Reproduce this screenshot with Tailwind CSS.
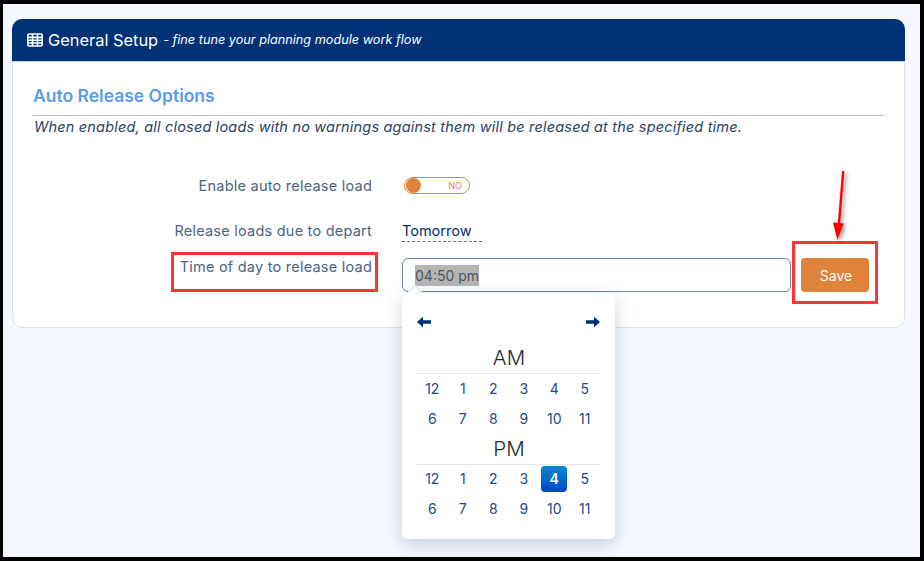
<!DOCTYPE html>
<html>
<head>
<meta charset="utf-8">
<script src="https://cdn.jsdelivr.net/npm/@tailwindcss/browser@4"></script>
</head>
<body class="m-0 bg-black font-['Inter',sans-serif]">
<div class="relative h-[561px] w-[924px] overflow-hidden bg-black pt-[4px] pr-[4px] pb-[4px] pl-[3px]">
  <div class="h-full w-full bg-[#f5f9ff] pt-[15px] pr-[15px] pl-[9px]">
    <div class="h-[309px] rounded-[10px] border border-[#dfe3e8] bg-white">
      <div class="-mx-px -mt-px flex h-[43px] items-center gap-[4px] rounded-t-[10px] border-b border-[#c9d3e0] bg-[#003275] pl-[15px] text-white">
        <svg width="16" height="14" viewBox="0 0 16 14" fill="none" stroke="white" stroke-width="1.6"><rect x="0.8" y="1" width="14.4" height="12" rx="1.2"/><path d="M0.8 4.4H15.2M0.8 7.2H15.2M0.8 10H15.2M5.5 1V13M10.5 1V13" /></svg>
        <span class="ml-[1px] text-[16.4px] leading-none">General Setup</span>
        <span class="ml-[1px] text-[12.7px] italic leading-none">- fine tune your planning module work flow</span>
      </div>
      <div class="px-[20px] pt-[24px]">
        <h2 class="border-b border-[#b4bfd0] pb-[9px] text-[17.5px] font-semibold leading-[20px] text-[#5a9bec]">Auto Release Options</h2>
        <p class="mt-[2px] pl-[1px] text-[14.5px] italic leading-[17px] tracking-[0.19px] text-[#2b4266]">When enabled, all closed loads with no warnings against them will be released at the specified time.</p>
        <div class="mt-[42px] flex items-center">
          <div class="w-[339px] text-right text-[14.5px] leading-[17px] tracking-[0.23px] text-[#4c6487]">Enable auto release load</div>
          <div class="ml-[32px] flex h-[17px] w-[66px] items-center justify-between rounded-full border border-[#e08338] pr-[7px] pl-[1px]">
            <span class="h-[15px] w-[15px] rounded-full bg-[#e08338]"></span>
            <span class="text-[9px] text-[#e87f5a]">NO</span>
          </div>
        </div>
        <div class="mt-[28px] flex items-start">
          <div class="w-[339px] text-right text-[14.5px] leading-[17px] tracking-[0.23px] text-[#4c6487]">Release loads due to depart</div>
          <div class="ml-[30px] h-[20px] w-[80px] border-b border-dashed border-[#6b6b6b] text-[14.5px] leading-[18px] text-[#00306f]">Tomorrow</div>
        </div>
        <div class="mt-[14px] flex items-start">
          <div class="w-[339px] pt-[2px] text-right text-[14.5px] leading-[17px] tracking-[0.23px] text-[#4c6487]">Time of day to release load</div>
          <div class="mt-[2px] ml-[30px] flex h-[34px] w-[389px] items-center rounded-[6px] border border-[#6486b8] bg-white pl-[12px] text-[14px] text-[#4b5563]"><span class="bg-[#b5b5b5]">04:50 pm</span></div>
          <button class="mt-[2px] ml-[10px] h-[34px] w-[68px] rounded-[4px] bg-[#df823a] pl-[2px] text-[14px] text-white">Save</button>
        </div>
      </div>
    </div>
  </div>

  <!-- time picker popover -->
  <div class="absolute top-[293px] left-[402px] h-[246px] w-[213px] rounded-[6px] bg-white px-[15px] pt-[22px] shadow-[0_5px_18px_rgba(60,80,110,0.25)]">
    <div class="absolute -top-[6px] left-[8px] h-[10px] w-[10px] rotate-45 border-t border-l border-[#dcdfe4] bg-white"></div>
    <div class="flex h-[14px] items-center justify-between">
      <svg width="14" height="12" viewBox="0 0 14 12" fill="#00306f"><path d="M0 6 6 0.8V4.2H14V7.8H6V11.2Z"/></svg>
      <svg width="14" height="12" viewBox="0 0 14 12" fill="#00306f"><path d="M14 6 8 0.8V4.2H0V7.8H8V11.2Z"/></svg>
    </div>
    <div class="mt-[16px] border-b border-[#e3e5e8] pb-[2px] pl-[1px] text-center text-[20.5px] font-light leading-[26px] text-[#262b33]">AM</div>
    <div class="grid grid-cols-6 text-center text-[14px] leading-[30px] text-[#1d4a85]">
      <div>12</div><div>1</div><div>2</div><div>3</div><div>4</div><div>5</div>
      <div>6</div><div>7</div><div>8</div><div>9</div><div>10</div><div>11</div>
    </div>
    <div class="border-b border-[#e3e5e8] pb-[1px] pl-[1px] text-center text-[20.5px] font-light leading-[29px] text-[#262b33]">PM</div>
    <div class="-mt-[1px] grid grid-cols-6 text-center text-[14px] leading-[30px] text-[#1d4a85]">
      <div>12</div><div>1</div><div>2</div><div>3</div>
      <div class="flex justify-center"><span class="mt-[2px] h-[26px] w-[26px] rounded-[4px] bg-gradient-to-b from-[#0088cc] to-[#0044cc] text-center font-semibold leading-[26px] text-white">4</span></div>
      <div>5</div>
      <div>6</div><div>7</div><div>8</div><div>9</div><div>10</div><div>11</div>
    </div>
  </div>

  <!-- annotations -->
  <div class="absolute top-[252px] left-[171px] h-[40px] w-[207px] border-[3px] border-[#ff3333]"></div>
  <div class="absolute top-[241px] left-[792px] h-[63px] w-[86px] border-[3px] border-[#ff3333]"></div>
  <svg class="absolute top-[168px] left-[825px] drop-shadow-[2px_2px_2px_rgba(0,0,0,0.45)]" width="30" height="76" viewBox="0 0 30 76">
    <path d="M18.2 3 14 56" stroke="#f00" stroke-width="2.4"/>
    <path d="M8 54.5 18.5 55.5 12.5 72Z" fill="#f00"/>
  </svg>
</div>
</body>
</html>
